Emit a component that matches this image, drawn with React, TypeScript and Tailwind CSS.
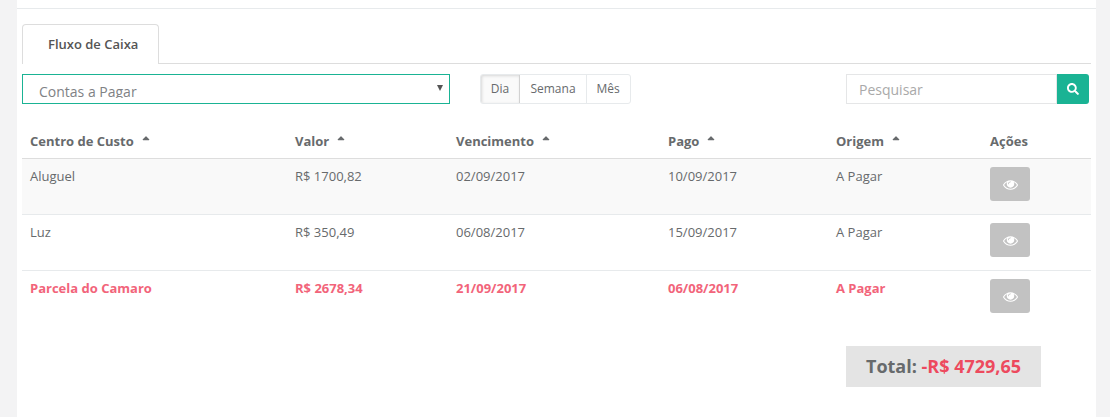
import { FaSearch, FaSortUp } from "react-icons/fa";

const COLUMNS = [
  { label: "Centro de Custo", width: "w-[265px]" },
  { label: "Valor", width: "w-[161px]" },
  { label: "Vencimento", width: "w-[212px]" },
  { label: "Pago", width: "w-[168px]" },
  { label: "Origem", width: "w-[154px]" },
];

const ROWS = [
  { centro: "Aluguel", valor: "R$ 1700,82", vencimento: "02/09/2017", pago: "10/09/2017", origem: "A Pagar", late: false },
  { centro: "Luz", valor: "R$ 350,49", vencimento: "06/08/2017", pago: "15/09/2017", origem: "A Pagar", late: false },
  { centro: "Parcela do Camaro", valor: "R$ 2678,34", vencimento: "21/09/2017", pago: "06/08/2017", origem: "A Pagar", late: true },
];

// font awesome 4 eye, the newer one in react-icons has a different pupil
function EyeIcon() {
  return (
    <svg viewBox="0 0 1792 1792" className="h-[15px] w-[15px]" fill="currentColor">
      <path d="M1664 960q-152-236-381-353 61 104 61 225 0 185-131.5 316.5t-316.5 131.5-316.5-131.5-131.5-316.5q0-121 61-225-229 117-381 353 133 205 333.5 326.5t434.5 121.5 434.5-121.5 333.5-326.5zm-720-384q0-20-14-34t-34-14q-125 0-214.5 89.5t-89.5 214.5q0 20 14 34t34 14 34-14 14-34q0-86 61-147t147-61q20 0 34-14t14-34zm848 384q0 34-20 69-140 230-376.5 368.5t-499.5 138.5-499.5-139-376.5-368q-20-35-20-69t20-69q140-229 376.5-368t499.5-139 499.5 139 376.5 368q20 35 20 69z" />
    </svg>
  );
}

function Row({ row, index }: { row: (typeof ROWS)[number]; index: number }) {
  const cells = [row.centro, row.valor, row.vencimento, row.pago, row.origem];
  return (
    <div
      className={`flex h-[56px] border-b border-[#e7eaec] ${index === 0 ? "bg-[#f9f9f9]" : "bg-white"} ${
        row.late ? "font-bold text-[#f2647a]" : "text-[#676a6c]"
      } ${index === ROWS.length - 1 ? "border-b-0" : ""}`}
    >
      {cells.map((text, i) => (
        <div key={i} className={`${COLUMNS[i].width} pl-[8px] pt-[8px] leading-[19px]`}>
          {text}
        </div>
      ))}
      <div className="pl-[8px] pt-[8px]">
        <button className="flex h-[34px] w-[40px] items-center justify-center rounded-[3px] bg-[#c2c2c2] text-white">
          <EyeIcon />
        </button>
      </div>
    </div>
  );
}

export default function App() {
  return (
    <div className="h-[417px] overflow-hidden bg-[#f3f3f4] px-[17px] font-['Open_Sans',sans-serif] text-[13px] text-[#676a6c]">
      <div className="h-full w-[1079px] bg-white">
        <div className="h-[9px] border-b border-[#e7eaec]" />
        <div className="px-[5px] pt-[15px]">
          <div className="flex h-[40px] w-[1069px] border-b border-[#dddddd]">
            <div className="flex h-[40px] w-[137px] items-center rounded-t-[4px] border border-b-0 border-[#dddddd] bg-white pl-[25px] font-semibold text-[#555555]">
              Fluxo de Caixa
            </div>
          </div>

          <div className="mt-[10px] flex h-[30px] items-start">
            <div className="relative h-[30px] w-[428px] border border-[#1ab394] pl-[16px] pt-[5px] text-[14px] text-[#808285]">
              <div className="h-[18px] overflow-hidden leading-[24px]">Contas a Pagar</div>
              <span className="absolute right-[6px] top-[10px] h-0 w-0 border-x-[3px] border-t-[6px] border-x-transparent border-t-[#555555]" />
            </div>

            <div className="ml-[30px] flex h-[30px] overflow-hidden rounded-[3px] border border-[#e7eaec] text-[12px] text-[#676a6c]">
              <div className="flex w-[39px] items-center justify-center border-r border-[#d2d2d2] bg-[#fafafa] shadow-[inset_1px_1px_3px_rgba(0,0,0,0.14)]">
                Dia
              </div>
              <div className="flex w-[67px] items-center justify-center border-r border-[#e7eaec]">Semana</div>
              <div className="flex w-[43px] items-center justify-center pr-[1px]">Mês</div>
            </div>

            <div className="ml-[215px] flex h-[30px]">
              <div className="flex w-[211px] items-center border border-[#e5e6e7] pl-[12px] text-[14px] text-[#a9a9a9]">
                Pesquisar
              </div>
              <button className="flex w-[32px] items-center justify-center rounded-r-[3px] bg-[#1ab394] text-[12px] text-white">
                <FaSearch />
              </button>
            </div>
          </div>

          <div className="mt-[20px] w-[1069px]">
            <div className="flex h-[35px] border-b border-[#dddddd] font-bold text-[#676a6c]">
              {COLUMNS.map((col) => (
                <div key={col.label} className={`${col.width} flex items-start pl-[8px] pt-[8px] leading-[19px]`}>
                  {col.label}
                  <FaSortUp className="ml-[6px] mt-[3px] text-[12px]" />
                </div>
              ))}
              <div className="pl-[8px] pt-[8px] leading-[19px]">Ações</div>
            </div>
            {ROWS.map((row, i) => (
              <Row key={row.centro} row={row} index={i} />
            ))}
          </div>

          <div className="ml-[824px] mt-[19px] flex h-[41px] w-[195px] items-center justify-center bg-[#e4e4e4] text-[18px] font-bold text-[#676a6c]">
            Total:&nbsp;<span className="text-[#ed4a5e]">-R$ 4729,65</span>
          </div>
        </div>
      </div>
    </div>
  );
}
